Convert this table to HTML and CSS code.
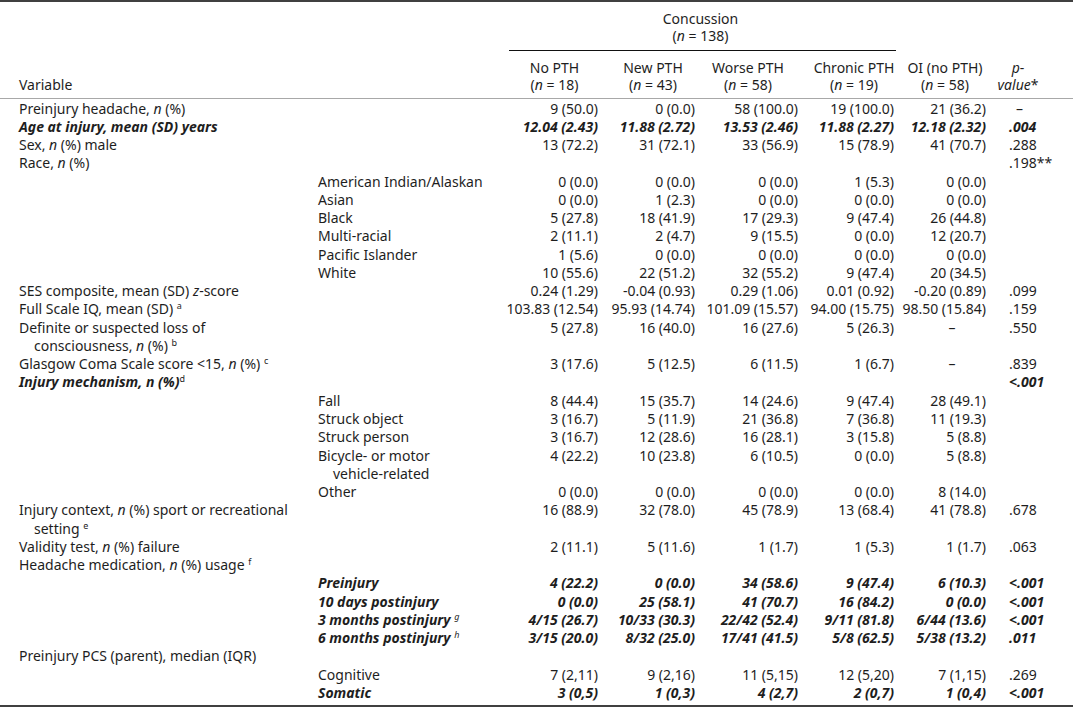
FILE: index.html
```html
<!DOCTYPE html>
<html lang="en">
<head>
<meta charset="utf-8">
<title>Characteristics by group</title>
<link rel="stylesheet" href="styles.css">
</head>
<body>
<table class="tbl">
  <colgroup>
    <col class="c-var"><col class="c-sub"><col class="c-n1"><col class="c-n2"><col class="c-n3"><col class="c-n4"><col class="c-n5"><col class="c-p">
  </colgroup>
  <thead>
    <tr>
      <th class="h-var" rowspan="2" colspan="2">Variable</th>
      <th class="h-group" colspan="4"><div class="group">Concussion<br>(<i>n</i> = 138)</div></th>
      <th class="h-col h-oi" rowspan="2">OI (no PTH)<br>(<i>n</i> = 58)</th>
      <th class="h-col h-p" rowspan="2"><i>p</i>-<br><i>value</i>*</th>
    </tr>
    <tr>
      <th class="h-col h-c1">No PTH<br>(<i>n</i> = 18)</th>
      <th class="h-col h-c2">New PTH<br>(<i>n</i> = 43)</th>
      <th class="h-col h-c3">Worse PTH<br>(<i>n</i> = 58)</th>
      <th class="h-col h-c4">Chronic PTH<br>(<i>n</i> = 19)</th>
    </tr>
  </thead>
  <tbody>
    <tr><td class="var">Preinjury headache, <i>n</i> (%)</td><td class="sub"></td><td class="num">9 (50.0)</td><td class="num">0 (0.0)</td><td class="num">58 (100.0)</td><td class="num">19 (100.0)</td><td class="num">21 (36.2)</td><td class="p p-dash">–</td></tr>
    <tr class="bi"><td class="var">Age at injury, mean (SD) years</td><td class="sub"></td><td class="num">12.04 (2.43)</td><td class="num">11.88 (2.72)</td><td class="num">13.53 (2.46)</td><td class="num">11.88 (2.27)</td><td class="num">12.18 (2.32)</td><td class="p">.004</td></tr>
    <tr><td class="var">Sex, <i>n</i> (%) male</td><td class="sub"></td><td class="num">13 (72.2)</td><td class="num">31 (72.1)</td><td class="num">33 (56.9)</td><td class="num">15 (78.9)</td><td class="num">41 (70.7)</td><td class="p">.288</td></tr>
    <tr><td class="var">Race, <i>n</i> (%)</td><td class="sub"></td><td class="num"></td><td class="num"></td><td class="num"></td><td class="num"></td><td class="num"></td><td class="p">.198**</td></tr>
    <tr><td class="var"></td><td class="sub">American Indian/Alaskan</td><td class="num">0 (0.0)</td><td class="num">0 (0.0)</td><td class="num">0 (0.0)</td><td class="num">1 (5.3)</td><td class="num">0 (0.0)</td><td class="p"></td></tr>
    <tr><td class="var"></td><td class="sub">Asian</td><td class="num">0 (0.0)</td><td class="num">1 (2.3)</td><td class="num">0 (0.0)</td><td class="num">0 (0.0)</td><td class="num">0 (0.0)</td><td class="p"></td></tr>
    <tr><td class="var"></td><td class="sub">Black</td><td class="num">5 (27.8)</td><td class="num">18 (41.9)</td><td class="num">17 (29.3)</td><td class="num">9 (47.4)</td><td class="num">26 (44.8)</td><td class="p"></td></tr>
    <tr><td class="var"></td><td class="sub">Multi-racial</td><td class="num">2 (11.1)</td><td class="num">2 (4.7)</td><td class="num">9 (15.5)</td><td class="num">0 (0.0)</td><td class="num">12 (20.7)</td><td class="p"></td></tr>
    <tr><td class="var"></td><td class="sub">Pacific Islander</td><td class="num">1 (5.6)</td><td class="num">0 (0.0)</td><td class="num">0 (0.0)</td><td class="num">0 (0.0)</td><td class="num">0 (0.0)</td><td class="p"></td></tr>
    <tr><td class="var"></td><td class="sub">White</td><td class="num">10 (55.6)</td><td class="num">22 (51.2)</td><td class="num">32 (55.2)</td><td class="num">9 (47.4)</td><td class="num">20 (34.5)</td><td class="p"></td></tr>
    <tr><td class="var">SES composite, mean (SD) <i>z</i>-score</td><td class="sub"></td><td class="num">0.24 (1.29)</td><td class="num">-0.04 (0.93)</td><td class="num">0.29 (1.06)</td><td class="num">0.01 (0.92)</td><td class="num">-0.20 (0.89)</td><td class="p">.099</td></tr>
    <tr><td class="var">Full Scale IQ, mean (SD) <sup>a</sup></td><td class="sub"></td><td class="num">103.83 (12.54)</td><td class="num">95.93 (14.74)</td><td class="num">101.09 (15.57)</td><td class="num">94.00 (15.75)</td><td class="num">98.50 (15.84)</td><td class="p">.159</td></tr>
    <tr><td class="var hang">Definite or suspected loss of<br>consciousness, <i>n</i> (%) <sup>b</sup></td><td class="sub"></td><td class="num">5 (27.8)</td><td class="num">16 (40.0)</td><td class="num">16 (27.6)</td><td class="num">5 (26.3)</td><td class="num dash">–</td><td class="p">.550</td></tr>
    <tr><td class="var">Glasgow Coma Scale score &lt;15, <i>n</i> (%) <sup>c</sup></td><td class="sub"></td><td class="num">3 (17.6)</td><td class="num">5 (12.5)</td><td class="num">6 (11.5)</td><td class="num">1 (6.7)</td><td class="num dash">–</td><td class="p">.839</td></tr>
    <tr class="bi"><td class="var">Injury mechanism, n (%)<sup class="up">d</sup></td><td class="sub"></td><td class="num"></td><td class="num"></td><td class="num"></td><td class="num"></td><td class="num"></td><td class="p">&lt;.001</td></tr>
    <tr><td class="var"></td><td class="sub">Fall</td><td class="num">8 (44.4)</td><td class="num">15 (35.7)</td><td class="num">14 (24.6)</td><td class="num">9 (47.4)</td><td class="num">28 (49.1)</td><td class="p"></td></tr>
    <tr><td class="var"></td><td class="sub">Struck object</td><td class="num">3 (16.7)</td><td class="num">5 (11.9)</td><td class="num">21 (36.8)</td><td class="num">7 (36.8)</td><td class="num">11 (19.3)</td><td class="p"></td></tr>
    <tr><td class="var"></td><td class="sub">Struck person</td><td class="num">3 (16.7)</td><td class="num">12 (28.6)</td><td class="num">16 (28.1)</td><td class="num">3 (15.8)</td><td class="num">5 (8.8)</td><td class="p"></td></tr>
    <tr><td class="var"></td><td class="sub hang">Bicycle- or motor<br>vehicle-related</td><td class="num">4 (22.2)</td><td class="num">10 (23.8)</td><td class="num">6 (10.5)</td><td class="num">0 (0.0)</td><td class="num">5 (8.8)</td><td class="p"></td></tr>
    <tr><td class="var"></td><td class="sub">Other</td><td class="num">0 (0.0)</td><td class="num">0 (0.0)</td><td class="num">0 (0.0)</td><td class="num">0 (0.0)</td><td class="num">8 (14.0)</td><td class="p"></td></tr>
    <tr><td class="var hang">Injury context, <i>n</i> (%) sport or recreational<br>setting <sup>e</sup></td><td class="sub"></td><td class="num">16 (88.9)</td><td class="num">32 (78.0)</td><td class="num">45 (78.9)</td><td class="num">13 (68.4)</td><td class="num">41 (78.8)</td><td class="p">.678</td></tr>
    <tr><td class="var">Validity test, <i>n</i> (%) failure</td><td class="sub"></td><td class="num">2 (11.1)</td><td class="num">5 (11.6)</td><td class="num">1 (1.7)</td><td class="num">1 (5.3)</td><td class="num">1 (1.7)</td><td class="p">.063</td></tr>
    <tr><td class="var">Headache medication, <i>n</i> (%) usage <sup>f</sup></td><td class="sub"></td><td class="num"></td><td class="num"></td><td class="num"></td><td class="num"></td><td class="num"></td><td class="p"></td></tr>
    <tr class="bi"><td class="var"></td><td class="sub">Preinjury</td><td class="num">4 (22.2)</td><td class="num">0 (0.0)</td><td class="num">34 (58.6)</td><td class="num">9 (47.4)</td><td class="num">6 (10.3)</td><td class="p">&lt;.001</td></tr>
    <tr class="bi"><td class="var"></td><td class="sub">10 days postinjury</td><td class="num">0 (0.0)</td><td class="num">25 (58.1)</td><td class="num">41 (70.7)</td><td class="num">16 (84.2)</td><td class="num">0 (0.0)</td><td class="p">&lt;.001</td></tr>
    <tr class="bi"><td class="var"></td><td class="sub">3 months postinjury <sup>g</sup></td><td class="num">4/15 (26.7)</td><td class="num">10/33 (30.3)</td><td class="num">22/42 (52.4)</td><td class="num">9/11 (81.8)</td><td class="num">6/44 (13.6)</td><td class="p">&lt;.001</td></tr>
    <tr class="bi"><td class="var"></td><td class="sub">6 months postinjury <sup>h</sup></td><td class="num">3/15 (20.0)</td><td class="num">8/32 (25.0)</td><td class="num">17/41 (41.5)</td><td class="num">5/8 (62.5)</td><td class="num">5/38 (13.2)</td><td class="p">.011</td></tr>
    <tr><td class="var">Preinjury PCS (parent), median (IQR)</td><td class="sub"></td><td class="num"></td><td class="num"></td><td class="num"></td><td class="num"></td><td class="num"></td><td class="p"></td></tr>
    <tr><td class="var"></td><td class="sub">Cognitive</td><td class="num">7 (2,11)</td><td class="num">9 (2,16)</td><td class="num">11 (5,15)</td><td class="num">12 (5,20)</td><td class="num">7 (1,15)</td><td class="p">.269</td></tr>
    <tr class="bi"><td class="var"></td><td class="sub">Somatic</td><td class="num">3 (0,5)</td><td class="num">1 (0,3)</td><td class="num">4 (2,7)</td><td class="num">2 (0,7)</td><td class="num">1 (0,4)</td><td class="p">&lt;.001</td></tr>
  </tbody>
</table>
</body>
</html>
```

FILE: styles.css
```css
* { box-sizing: border-box; }
html, body { margin: 0; padding: 0; background: #ffffff; }
body {
  font-family: "Noto Sans", "DejaVu Sans", sans-serif;
  font-size: 14px;
  color: #1e1e1e;
}

.tbl {
  width: 1073px;
  table-layout: fixed;
  border-collapse: separate;
  border-spacing: 0;
  border-top: 2px solid #404040;
  border-bottom: 2px solid #404040;
}

.c-var { width: 308px; }
.c-sub { width: 197px; }
.c-n1 { width: 99px; }
.c-n2 { width: 98px; }
.c-n3 { width: 102px; }
.c-n4 { width: 96px; }
.c-n5 { width: 94px; }
.c-p { width: 79px; }

th {
  font-weight: normal;
  line-height: 17px;
  padding: 0;
  white-space: nowrap;
}
.h-var, .h-col {
  vertical-align: bottom;
  border-bottom: 1px solid #a8a8a8;
  padding-top: 8px;
  padding-bottom: 5px;
}
.h-var { text-align: left; padding-left: 19px; }
.h-col { text-align: center; }
.h-c3 { padding-right: 10px; }
.h-c4 { padding-left: 4px; }
.h-oi { padding-right: 4px; }
.h-p { padding-right: 31px; }

.h-group {
  vertical-align: top;
  padding-top: 8px;
}
.group {
  margin: 0 4px;
  padding-bottom: 6px;
  padding-right: 4px;
  border-bottom: 1px solid #111;
  text-align: center;
}

td {
  padding: 0;
  line-height: 18.27px;
  vertical-align: top;
  white-space: nowrap;
}
tbody tr:first-child td { padding-top: 0.5px; }
tbody tr:last-child td { padding-bottom: 2.6px; }

.var { padding-left: 19px; }
.sub { padding-left: 10px; }
.var.hang { padding-left: 34px; text-indent: -15px; }
.sub.hang { padding-left: 25px; text-indent: -15px; }

.num { text-align: right; }
td:nth-child(3) { padding-right: 6px; }
td:nth-child(4) { padding-right: 7px; }
td:nth-child(5) { padding-right: 6px; }
td:nth-child(6) { padding-right: 6px; }
td:nth-child(7) { padding-right: 8px; }
td.dash { text-align: center; padding-right: 0; padding-left: 10px; }
.p { padding-left: 15px; }
.p.p-dash { padding-left: 22px; }

.bi td { font-weight: bold; font-style: italic; }

sup {
  font-size: 9px;
  line-height: 0;
  vertical-align: 5px;
  font-weight: normal;
}
sup.up { font-style: normal; }
```
